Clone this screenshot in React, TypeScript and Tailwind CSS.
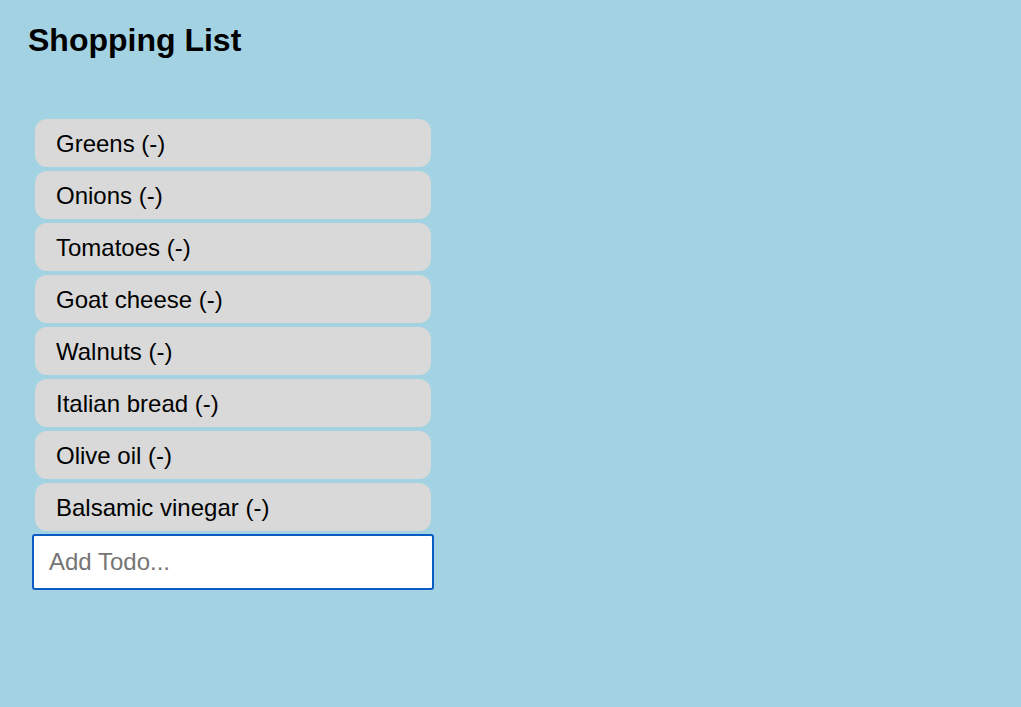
import React from "react";

const items = [
  "Greens",
  "Onions",
  "Tomatoes",
  "Goat cheese",
  "Walnuts",
  "Italian bread",
  "Olive oil",
  "Balsamic vinegar",
];

export default function App() {
  return (
    <div
      className="min-h-[707px] w-full bg-[#a3d2e2] text-black"
      style={{ fontFamily: '"Liberation Sans", Arial, sans-serif' }}
    >
      <div className="px-[28px] pt-[22px]">
        <h1 className="text-[32px] leading-[36px] font-bold">Shopping List</h1>
        <div className="ml-[4px] mt-[61px] flex w-[402px] flex-col items-center gap-[4px]">
          {items.map((it) => (
            <div
              key={it}
              className="flex h-[48px] w-[396px] items-center rounded-[12px] bg-[#d9d9d9] pl-[21px] pt-[2px] text-[24px]"
            >
              {it} (-)
            </div>
          ))}
          <input
            placeholder="Add Todo..."
            className="-mt-[1px] h-[56px] w-[402px] rounded-[3px] border-2 border-[#0a5cc4] bg-white pl-[15px] text-[24px] outline-none placeholder:text-[#757575]"
          />
        </div>
      </div>
    </div>
  );
}
